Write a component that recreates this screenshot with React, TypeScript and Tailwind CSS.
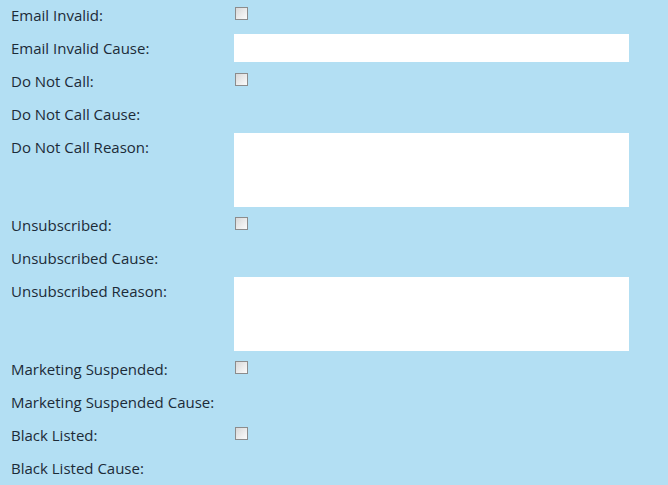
import React from 'react';

type Field = { label: string; kind: 'check' | 'input' | 'area' | 'none' };

const FIELDS: Field[] = [
  { label: 'Email Invalid:', kind: 'check' },
  { label: 'Email Invalid Cause:', kind: 'input' },
  { label: 'Do Not Call:', kind: 'check' },
  { label: 'Do Not Call Cause:', kind: 'none' },
  { label: 'Do Not Call Reason:', kind: 'area' },
  { label: 'Unsubscribed:', kind: 'check' },
  { label: 'Unsubscribed Cause:', kind: 'none' },
  { label: 'Unsubscribed Reason:', kind: 'area' },
  { label: 'Marketing Suspended:', kind: 'check' },
  { label: 'Marketing Suspended Cause:', kind: 'none' },
  { label: 'Black Listed:', kind: 'check' },
  { label: 'Black Listed Cause:', kind: 'none' },
];

const Row: React.FC<{ field: Field }> = ({ field }) => {
  return (
    <div className={`flex items-start ${field.kind === 'area' ? 'h-[78px]' : 'h-[33px]'}`}>
      <label className="w-[234px] shrink-0 pl-[11px] pt-[5px] text-[15px] leading-[20px]">{field.label}</label>
      {field.kind === 'check' && (
        <input
          type="checkbox"
          className="mt-[7px] ml-[1px] h-[13px] w-[13px] appearance-none border border-[#8c8c8c] bg-linear-to-br from-[#d9d9d9] to-[#fbfbfb]"
        />
      )}
      {field.kind === 'input' && (
        <input type="text" className="mt-[1px] h-[28px] w-[395px] bg-white outline-none" />
      )}
      {field.kind === 'area' && (
        <textarea className="mt-[1px] h-[74px] w-[395px] resize-none bg-white outline-none" />
      )}
    </div>
  );
};

export default function App() {
  return (
    <div className="h-[485px] w-[668px] overflow-hidden bg-[#b3dff3] text-[#1c2b38]" style={{ fontFamily: '"Open Sans", sans-serif' }}>
      {FIELDS.map(f => (
        <Row key={f.label} field={f} />
      ))}
    </div>
  );
}
